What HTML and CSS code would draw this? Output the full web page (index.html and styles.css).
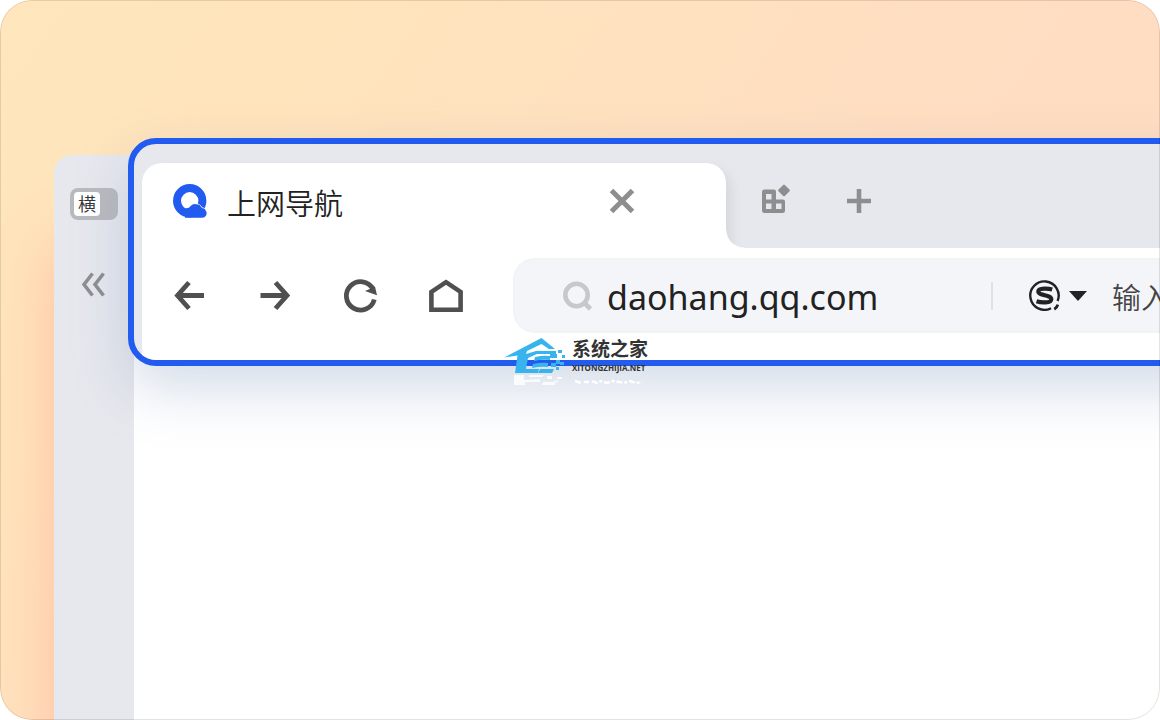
FILE: index.html
```html
<!DOCTYPE html>
<html lang="zh-CN">
<head>
<meta charset="utf-8">
<title>上网导航</title>
<link rel="stylesheet" href="styles.css">
</head>
<body>
<main class="stage">
  <div class="window">
    <aside class="sidebar">
      <button class="toggle" type="button"><span class="toggle-knob">横</span></button>
      <button class="collapse" type="button" aria-label="收起">
        <svg width="24" height="26" viewBox="0 0 24 26"><path d="M10.500 1.500 2 12.500l8.500 11M21.500 1.500 13 12.500l8.500 11" fill="none" stroke="#8d8e91" stroke-width="3.600"/></svg>
      </button>
    </aside>
    <div class="page"></div>
  </div>

  <section class="browser">
    <div class="tabs">
      <div class="tab">
        <svg class="tab-logo" width="34" height="34" viewBox="0 0 34 34">
          <circle cx="16.700" cy="16.800" r="12.700" fill="none" stroke="#215bef" stroke-width="8"/>
          <path fill="#215bef" d="M12 33.800 11 26q2-2.500 5-2.200a7.200 7.200 0 0 1 12.300-.6 5 5 0 0 1 4.500 3.500 4.500 4.500 0 0 1-3.800 7.100Z"/>
          <path d="M21.500 19.600c4-.2 6.500 1.500 7.400 4 1.900.2 3.300 1 4.300 2.400" fill="none" stroke="#fff" stroke-width=".8"/>
        </svg>
        <span class="tab-title">上网导航</span>
        <button class="icon-button" type="button" aria-label="关闭标签">
          <svg width="26" height="26" viewBox="0 0 26 26"><path d="M2.500 2.500l21 21M23.500 2.500l-21 21" stroke="#8e8e8f" stroke-width="5"/></svg>
        </button>
      </div>
      <div class="tab-actions">
        <button class="icon-button" type="button" aria-label="应用">
          <svg width="30" height="34" viewBox="0 -2 30 34"><path fill="#8e8e90" fill-rule="evenodd" d="M3.500 3.500H13a2 2 0 0 1 2 2v8h7a2 2 0 0 1 2 2v9a2.500 2.500 0 0 1-2.500 2.500h-18A2.500 2.500 0 0 1 1 24.500V6a2.500 2.500 0 0 1 2.500-2.500ZM5 8v5.500h5.500V8Zm0 9.500V23h5.500v-5.500Zm10 0V23h5.500v-5.500Z"/><rect x="18.500" y="-.1" width="9" height="9" rx="1.200" transform="rotate(45 23 4.400)" fill="#8e8e90"/></svg>
        </button>
        <button class="icon-button" type="button" aria-label="新建标签">
          <svg width="24" height="24" viewBox="0 0 24 24"><path d="M12 0v24M0 12h24" stroke="#8e8e90" stroke-width="4.600"/></svg>
        </button>
      </div>
    </div>

    <div class="toolbar">
      <button class="nav-button" type="button" aria-label="后退">
        <svg width="38" height="38" viewBox="0 0 38 38"><path d="M20 5.500 8.500 18.500l11.500 13M8 18.500H35" fill="none" stroke="#505050" stroke-width="4.800"/></svg>
      </button>
      <button class="nav-button" type="button" aria-label="前进">
        <svg width="38" height="38" viewBox="0 0 38 38"><path d="M20.500 5.500l11.500 13-11.500 13M32.500 18.500H5.500" fill="none" stroke="#505050" stroke-width="4.800"/></svg>
      </button>
      <button class="nav-button" type="button" aria-label="刷新">
        <svg width="38" height="38" viewBox="0 0 38 38"><path d="M33.300 22.500A14.200 14.200 0 1 1 32 12" fill="none" stroke="#505050" stroke-width="4.800"/><path d="M34 9.500 36 18.300 24 14l7-3Z" fill="#505050"/></svg>
      </button>
      <button class="nav-button" type="button" aria-label="主页">
        <svg width="38" height="38" viewBox="0 0 38 38"><path d="M4.400 32.700V14.900L19 5.200l14.600 9.700v17.800Z" fill="none" stroke="#505050" stroke-width="4.600"/></svg>
      </button>
      <form class="address">
        <svg width="30" height="30" viewBox="0 0 30 30"><circle cx="13.500" cy="14" r="11.200" fill="none" stroke="#c7c8ca" stroke-width="4.600"/><path d="M21 21.500l6.500 6.500" stroke="#c7c8ca" stroke-width="4.800"/></svg>
        <input class="url" type="text" aria-label="网址" value="daohang.qq.com">
        <span class="divider"></span>
        <button class="engine" type="button" aria-label="搜索引擎">
          <svg width="31" height="31" viewBox="0 0 31 31"><path d="M22 28.200A14.200 14.200 0 1 1 28.600 21" fill="none" stroke="#222" stroke-width="2.400"/><path d="M25.300 29.200q2.700-1.500 3.500-4.600" fill="none" stroke="#222" stroke-width="2.800"/><path d="M23.200 9.400C20.500 8.600 9.500 7.300 9.300 11.400c-.2 4.400 13 3.200 13 7.800 0 4.200-10.500 3.500-14.800 2.100" fill="none" stroke="#222" stroke-width="4.200"/></svg>
          <svg width="18" height="10" viewBox="0 0 18 10"><path d="M0 0h18L9 10Z" fill="#222"/></svg>
        </button>
        <input class="query" type="text" aria-label="搜索" placeholder="输入">
      </form>
    </div>
  </section>

  <div class="watermark">
    <svg width="64" height="50" viewBox="0 0 64 50">
      <path fill="#37b4ed" d="M0 19.500 37.500 0 51 11h-6l-7.500-5L23 13l-1 3 10-3h20v3H33l-9 4-2 11h13l-1 4H11l2.500-17.500Z"/>
      <path fill="#37b4ed" d="M31 19q9-2 15-1v4q-8-1-16 1Zm-2 7q9-2 15-1v4q-8-1-16 1Zm7 5h14l-2 4H34Z"/>
      <path fill="#37b4ed" d="M46 16h7v4h-7Zm8-4h4v3h-4Zm4 5h3v3h-3Zm-6 5h4v4h-4Zm-5 3h5v4h-5Zm9-1h4v3h-4Zm-4 5h3v3h-3Z"/>
      <path fill="#fff" opacity=".8" d="M10 37h10v5l16-1v3H21v3H10Zm15 0h15l-2 2H25Zm14 7h12v3H38Zm4-6h5v3h-5Zm10 1h5v2h-5Z"/>
      <path fill="#fff" opacity=".4" d="M50 42h4v3h-4Z"/>
    </svg>
    <div class="watermark-text">
      <strong>系统之家</strong>
      <small>XITONGZHIJIA.NET</small>
      <svg width="78" height="8" viewBox="0 0 78 8"><path d="M3 5l6 2M12 6h5M20 5l5 2 4-2 6 2 6-2 6 1 5 1 6-2 6 2 6-1" fill="none" stroke="#fff" stroke-width="2.400" stroke-dasharray="6 2 3 2"/></svg>
    </div>
  </div>
</main>
</body>
</html>
```
FILE: styles.css
```css
* {
  box-sizing: border-box;
}

body {
  margin: 0;
  background: #fff;
  font-family: "Noto Sans", "Noto Sans CJK SC", sans-serif;
}

button {
  display: flex;
  align-items: center;
  justify-content: center;
  padding: 0;
  border: 0;
  background: none;
  font: inherit;
}

svg {
  display: block;
  flex: none;
}

.stage {
  position: relative;
  display: flex;
  min-height: 100vh;
  padding: 155px 0 0 54px;
  overflow: hidden;
  border-radius: 32px;
  background: linear-gradient(125deg, #ffe6bc 0%, #ffe4bc 20%, #ffddc2 65%, #ffddc2 100%);
}

.stage::after {
  content: "";
  position: absolute;
  inset: 0;
  border: 1px solid rgba(0, 0, 0, 0.11);
  border-radius: 32px;
  pointer-events: none;
}

.window {
  display: flex;
  flex: 1;
  border-radius: 18px 0 0 0;
  box-shadow: 0 90px 60px rgba(255, 130, 120, 0.36);
}

.sidebar {
  display: flex;
  flex-direction: column;
  align-items: center;
  gap: 52px;
  width: 80px;
  padding-top: 33px;
  border-radius: 18px 0 0 0;
  background: #e7e8ee;
}

.toggle {
  justify-content: flex-start;
  width: 48px;
  height: 32px;
  padding: 4px;
  border-radius: 8px;
  background: #b9babe;
}

.toggle-knob {
  width: 26px;
  height: 24px;
  border-radius: 4px;
  background: #fff;
  color: #333;
  font-size: 18px;
  font-weight: 350;
  line-height: 24px;
}

.page {
  flex: 1;
  background: #fff;
}

.browser {
  position: absolute;
  top: 138px;
  right: -80px;
  left: 128px;
  padding: 19px 0 0 8px;
  overflow: hidden;
  border: 6px solid #215bef;
  border-radius: 28px;
  background: #e7e8ee;
  box-shadow: 0 24px 56px rgba(105, 132, 175, 0.28);
}

.tabs {
  display: flex;
  height: 85px;
}

.tab {
  position: relative;
  display: flex;
  align-items: center;
  gap: 20px;
  width: 584px;
  padding: 0 91px 9px 31px;
  border-radius: 20px 20px 0 0;
  background: #fff;
  box-shadow: 6px 6px 12px rgba(0, 0, 0, 0.07);
}

.tab::after {
  content: "";
  position: absolute;
  bottom: 0;
  left: 100%;
  width: 18px;
  height: 18px;
  background: radial-gradient(circle at 100% 0, transparent 17px, #fff 18px);
}

.tab-title {
  flex: 1;
  padding-top: 6px;
  color: #222;
  font-size: 29px;
  font-weight: 350;
  line-height: 40px;
}

.tab-actions {
  display: flex;
  align-items: center;
  gap: 56px;
  padding: 0 0 9px 35px;
}

.toolbar {
  position: relative;
  display: flex;
  align-items: center;
  gap: 48px;
  padding: 10px 0 27px 27px;
  background: #fff;
}

.address {
  display: flex;
  flex: 1;
  align-items: center;
  height: 75px;
  min-width: 0;
  padding-left: 48px;
  overflow: hidden;
  border: 2px solid #f2f3f5;
  border-right: 0;
  border-radius: 22px 0 0 22px;
  background: #f4f5f9;
}

.address input {
  min-width: 0;
  padding: 4px 0 0;
  border: 0;
  outline: 0;
  background: none;
  font-family: inherit;
}

.address .url {
  flex: none;
  width: 398px;
  padding: 2px 0 0 14px;
  color: #222;
  font-size: 34px;
}

.divider {
  flex: none;
  width: 2px;
  height: 28px;
  background: #dfe0ea;
}

.engine {
  flex: none;
  gap: 9px;
  padding: 0 25px 0 36px;
}

.address .query {
  flex: 1;
  font-size: 29px;
  font-weight: 350;
}

.query::placeholder {
  color: #444;
}

.watermark {
  position: absolute;
  top: 338px;
  left: 504px;
  display: flex;
  gap: 4px;
}

.watermark-text {
  display: flex;
  flex-direction: column;
  color: #333;
}

.watermark strong {
  font-size: 19px;
  line-height: 22px;
}

.watermark small {
  font-family: "Open Sans", sans-serif;
  font-size: 8px;
  font-weight: 700;
  line-height: 16px;
}
```
